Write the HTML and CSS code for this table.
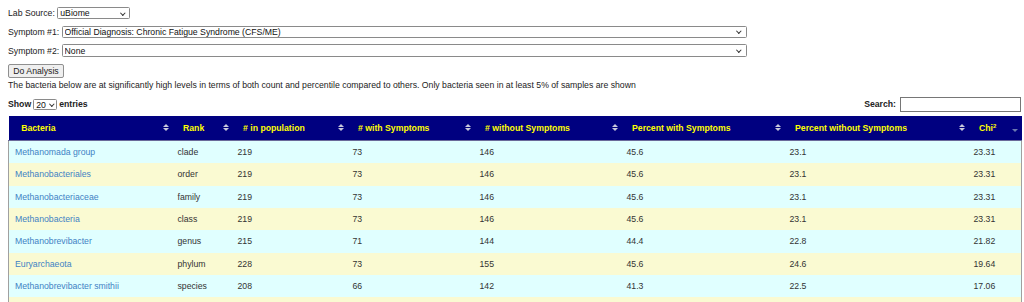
FILE: index.html
```html
<!DOCTYPE html>
<html>
<head>
<meta charset="utf-8">
<link rel="stylesheet" href="styles.css">
</head>
<body>
<div class="form">
  <div class="form-row">
    <label class="lbl">Lab Source:</label>
    <span class="sel-wrap"><select class="sel sel-lab"><option>uBiome</option></select></span>
  </div>
  <div class="form-row">
    <label class="lbl">Symptom #1:</label>
    <span class="sel-wrap"><select class="sel sel-wide"><option>Official Diagnosis: Chronic Fatigue Syndrome (CFS/ME)</option></select></span>
  </div>
  <div class="form-row">
    <label class="lbl">Symptom #2:</label>
    <span class="sel-wrap"><select class="sel sel-wide"><option>None</option></select></span>
  </div>
  <button class="btn">Do Analysis</button>
  <p class="note">The bacteria below are at significantly high levels in terms of both count and percentile compared to others. Only bacteria seen in at least 5% of samples are shown</p>
</div>

<div class="controls">
  <div class="length">Show <span class="sel-wrap len-wrap"><select class="sel sel-len"><option>20</option></select></span> entries</div>
  <div class="search">Search: <input class="search-box" type="text"></div>
</div>

<table class="grid">
  <colgroup>
    <col class="c1"><col class="c2"><col class="c3"><col class="c4"><col class="c5"><col class="c6"><col class="c7"><col class="c8">
  </colgroup>
  <thead>
    <tr>
      <th><div class="th-in"><span>Bacteria</span><i class="sort"></i></div></th>
      <th><div class="th-in"><span>Rank</span><i class="sort"></i></div></th>
      <th><div class="th-in"><span># in population</span><i class="sort"></i></div></th>
      <th><div class="th-in"><span># with Symptoms</span><i class="sort"></i></div></th>
      <th><div class="th-in"><span># without Symptoms</span><i class="sort"></i></div></th>
      <th><div class="th-in"><span>Percent with Symptoms</span><i class="sort"></i></div></th>
      <th><div class="th-in"><span>Percent without Symptoms</span><i class="sort"></i></div></th>
      <th><div class="th-in"><span>Chi<sup>2</sup></span><i class="sort-desc"></i></div></th>
    </tr>
  </thead>
  <tbody>
    <tr class="odd"><td><a href="#">Methanomada group</a></td><td>clade</td><td>219</td><td>73</td><td>146</td><td>45.6</td><td>23.1</td><td>23.31</td></tr>
    <tr class="even"><td><a href="#">Methanobacteriales</a></td><td>order</td><td>219</td><td>73</td><td>146</td><td>45.6</td><td>23.1</td><td>23.31</td></tr>
    <tr class="odd"><td><a href="#">Methanobacteriaceae</a></td><td>family</td><td>219</td><td>73</td><td>146</td><td>45.6</td><td>23.1</td><td>23.31</td></tr>
    <tr class="even"><td><a href="#">Methanobacteria</a></td><td>class</td><td>219</td><td>73</td><td>146</td><td>45.6</td><td>23.1</td><td>23.31</td></tr>
    <tr class="odd"><td><a href="#">Methanobrevibacter</a></td><td>genus</td><td>215</td><td>71</td><td>144</td><td>44.4</td><td>22.8</td><td>21.82</td></tr>
    <tr class="even"><td><a href="#">Euryarchaeota</a></td><td>phylum</td><td>228</td><td>73</td><td>155</td><td>45.6</td><td>24.6</td><td>19.64</td></tr>
    <tr class="odd"><td><a href="#">Methanobrevibacter smithii</a></td><td>species</td><td>208</td><td>66</td><td>142</td><td>41.3</td><td>22.5</td><td>17.06</td></tr>
    <tr class="even"><td></td><td></td><td></td><td></td><td></td><td></td><td></td><td></td></tr>
  </tbody>
</table>
</body>
</html>
```
FILE: styles.css
```css
html, body {
  margin: 0;
  padding: 0;
  background: #ffffff;
}
body {
  padding-left: 8px;
  font-family: "Liberation Sans", Arial, sans-serif;
  font-size: 8.7px;
  color: #222222;
}
.form {
  padding-top: 7px;
}
.form-row {
  display: flex;
  align-items: center;
  height: 12.3px;
  margin-bottom: 6.4px;
}
.form-row:nth-child(3) { margin-bottom: 0; }
.lbl {
  margin-right: 2.4px;
}
.sel-wrap {
  position: relative;
  display: inline-flex;
}
.sel-wrap::after {
  content: "";
  position: absolute;
  right: 6px;
  top: 50%;
  width: 2.6px;
  height: 2.6px;
  margin-top: -2.4px;
  border-right: 1.3px solid #333333;
  border-bottom: 1.3px solid #333333;
  transform: rotate(45deg);
  pointer-events: none;
}
.len-wrap { margin: 0 2px; }
.len-wrap::after { right: 4px; }
.sel {
  -webkit-appearance: none;
  appearance: none;
  font-family: "Liberation Sans", Arial, sans-serif;
  font-size: 8.7px;
  color: #111111;
  box-sizing: border-box;
  height: 12.3px;
  line-height: 10px;
  padding: 0 0 0 2px;
  margin: 0;
  border: 1px solid #8a8a8a;
  border-radius: 1.5px;
  background: #ffffff;
}
.sel-lab { width: 73px; }
.sel-wide { width: 685.5px; }
.sel-len { width: 24px; height: 11.4px; font-weight: normal; }
.btn {
  display: block;
  margin-top: 7.7px;
  box-sizing: border-box;
  width: 56px;
  height: 13.4px;
  padding: 0;
  font-family: "Liberation Sans", Arial, sans-serif;
  font-size: 8.7px;
  color: #222222;
  background: #efefef;
  border: 1px solid #8f8f8f;
  border-radius: 2px;
}
.note {
  margin: 2px 0 0 0;
  line-height: 10px;
  white-space: nowrap;
}
.controls {
  display: flex;
  justify-content: space-between;
  align-items: center;
  width: 1013px;
  height: 15px;
  margin-top: 7.2px;
  font-weight: bold;
  color: #222222;
}
.length, .search {
  display: flex;
  align-items: center;
}
.search-box {
  box-sizing: border-box;
  width: 121px;
  height: 15px;
  margin-left: 4px;
  border: 1px solid #767676;
  padding: 0;
}
.grid {
  margin-top: 4px;
  width: 1013px;
  table-layout: fixed;
  border-collapse: collapse;
  border-spacing: 0;
}
.c1 { width: 164px; }
.c2 { width: 60px; }
.c3 { width: 115px; }
.c4 { width: 127px; }
.c5 { width: 147px; }
.c6 { width: 163px; }
.c7 { width: 184px; }
.c8 { width: 53px; }
.grid th {
  background: #000080;
  color: #ffff00;
  font-weight: bold;
  text-align: left;
  height: 24px;
  padding: 0 4px 0 10.5px;
  border-bottom: 1px solid #6a6a9a;
}
.grid th:first-child { padding-left: 12.7px; }
.th-in {
  display: flex;
  align-items: center;
  justify-content: space-between;
  white-space: nowrap;
}
.th-in sup {
  font-size: 6px;
  line-height: 0;
  vertical-align: 3px;
}
.sort {
  display: flex;
  flex-direction: column;
  gap: 1px;
  width: 6px;
}
.sort::before, .sort::after {
  content: "";
  display: block;
  width: 0;
  height: 0;
  border-left: 3px solid transparent;
  border-right: 3px solid transparent;
}
.sort::before { border-bottom: 3.5px solid #c8c8dc; }
.sort::after { border-top: 3.5px solid #c8c8dc; }
.sort-desc {
  display: block;
  width: 0;
  height: 0;
  margin-top: 5px;
  border-left: 3px solid transparent;
  border-right: 3px solid transparent;
  border-top: 3.5px solid #6a78b0;
}
.grid td {
  height: 22.33px;
  padding: 0 5px;
  color: #333333;
  white-space: nowrap;
  overflow: hidden;
}
.grid td:first-child {
  padding-left: 6px;
  border-left: 1px solid #a0a0a0;
}
.grid td:last-child {
  border-right: 1px solid #a0a0a0;
}
.grid tr.odd td { background: #e0ffff; }
.grid tr.even td { background: #fafad2; }
.grid a {
  color: #3f82c4;
  text-decoration: none;
}
```
